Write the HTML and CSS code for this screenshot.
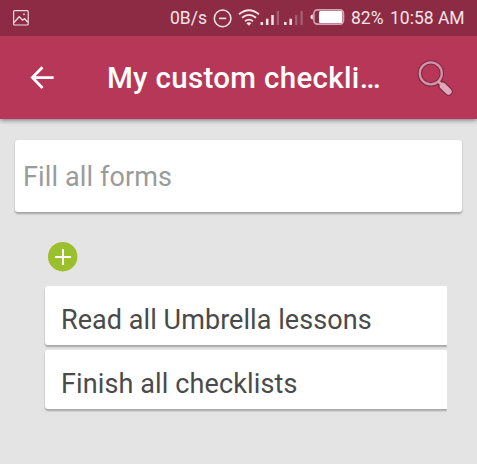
FILE: index.html
```html
<!DOCTYPE html>
<html lang="en">
<head>
<meta charset="utf-8">
<title>My custom checklist</title>
<link rel="stylesheet" href="styles.css">
</head>
<body>
<div class="status">
  <svg class="picture" width="18" height="18" viewBox="0 0 18 18" fill="none" stroke="#ecdce1"><rect x="1.6" y="1.6" width="14.6" height="14.4" rx="1" stroke-width="1.2"/><path d="M2 13.5 7.2 7.7l3.4 3.4 2-1.4 3.2 3.5" stroke-width="1.3"/><rect x="11.2" y="4.5" width="1.6" height="1.6" fill="#ecdce1" stroke="none"/></svg>
  <span class="speed">0B/s</span>
  <svg class="signals" width="134" height="24" viewBox="212 6 134 24" fill="none" stroke="#f3e5e9">
    <circle cx="222.6" cy="18.4" r="8.3" stroke-width="1.5"/><path d="M219 18.4h7.2" stroke-width="1.6"/>
    <path d="M239 14.2Q249 6.2 259 14.2M242 17.8Q249 12 256 17.8M245 21.2Q249 18 253 21.2" stroke-width="1.8"/><path d="m246.4 23.2 2.5 2.6 2.5-2.6q-2.5-1.8-5 0Z" fill="#f3e5e9" stroke="none"/>
    <path d="M261.8 22v3M267.2 18.8V25M272.5 15V25M285.3 22v3M290.7 18.8V25" stroke-width="2.5"/>
    <path d="M277.9 11v14M296.2 15v10M301.6 11v14" stroke="#a66075" stroke-width="2.2"/>
    <path d="M312.8 14.2q-2.4.7-2.4 2.7t2.4 2.7Z" fill="#f3e5e9" stroke="none"/><rect x="313.9" y="9.9" width="29.6" height="14.2" rx="3.5" stroke="#cfa3b0" stroke-width="1.6"/><rect x="319" y="11" width="23.3" height="12" rx="1.5" fill="#fff" stroke="none"/>
  </svg>
  <span class="percent">82%</span>
  <span class="clock">10:58 AM</span>
</div>
<header class="bar">
  <svg class="back" width="26" height="26" viewBox="0 0 26 26" fill="none" stroke="#fff" stroke-width="2.8"><path d="M13.5 2.2 3.4 12.6l10.1 10.4M3.4 12.6h21.2"/></svg>
  <h1 class="title">My custom checkli…</h1>
  <svg class="search" width="38" height="38" viewBox="0 0 38 38" fill="none"><circle cx="14.8" cy="14.4" r="11" stroke="#792b43" stroke-width="4.4"/><path d="m22 22 3 3" stroke="#792b43" stroke-width="5.5"/><path d="m26.5 26.5 6 6" stroke="#792b43" stroke-width="8.8" stroke-linecap="round"/><circle cx="14.8" cy="14.4" r="11" stroke="#d592a5" stroke-width="2.3"/><path d="m22.4 22.4 4 4" stroke="#dea0b0" stroke-width="2.8"/><path d="m26.9 26.9 5.6 5.6" stroke="#e2a8b7" stroke-width="6.4" stroke-linecap="round"/></svg>
</header>
<main class="content">
  <div class="entry">Fill all forms</div>
  <svg class="add" width="30" height="30" viewBox="0 0 30 30"><circle cx="14.7" cy="14.7" r="14.7" fill="#9bbf2d"/><path d="M15 7v16M7 15h16" stroke="#fff" stroke-width="2"/></svg>
  <div class="list">
    <div class="item first"><span>Read all Umbrella lessons</span></div>
    <div class="item second"><span>Finish all checklists</span></div>
  </div>
</main>
</body>
</html>
```
FILE: styles.css
```css
* { box-sizing: border-box; }
body { margin: 0; height: 464px; overflow: hidden; background: #e4e4e4; font-family: Roboto, sans-serif; }
svg { display: block; flex: none; }
.status { position: relative; z-index: 1; display: flex; height: 36px; padding: 6px 0 0 12px; background: #8c2b43; color: #f3e5e9; font-size: 17.5px; line-height: 25px; white-space: nowrap; }
.picture { margin-top: 3px; }
.speed { width: 42px; margin-left: 140px; }
.percent { width: 39px; margin-left: 5px; }
.clock { width: 80px; }
.bar { position: relative; display: flex; height: 83px; background: #b73759; box-shadow: 0 1px 5px rgba(0, 0, 0, .5); }
.back { margin: 29px 0 0 29px; }
.title { width: 288px; margin: 23px 0 0 52px; color: #fff; font-size: 29.5px; font-weight: 500; letter-spacing: .32px; line-height: 38px; white-space: nowrap; }
.search { margin: 23px 0 0 21px; }
.content { padding: 21px 15px 0; }
.entry { height: 72px; padding: 0 8px; border-radius: 3px; background: #fff; box-shadow: 0 1.5px 2px rgba(0, 0, 0, .28); color: #9b9b9b; font-size: 27px; letter-spacing: .12px; line-height: 75px; }
.add { margin: 30px 0 0 33px; }
.list { width: 402px; margin: 14px 0 0 30px; padding-bottom: 6px; clip-path: inset(-2px 0 0 -4px); }
.item { height: 59px; margin-bottom: 5px; padding-left: 16px; border-radius: 3px 0 0 3px; background: #fff; box-shadow: 0 2px 2px rgba(0, 0, 0, .28); color: #4a4a4a; font-size: 27px; letter-spacing: .06px; line-height: 68px; white-space: nowrap; }
.second { letter-spacing: .12px; }
```
